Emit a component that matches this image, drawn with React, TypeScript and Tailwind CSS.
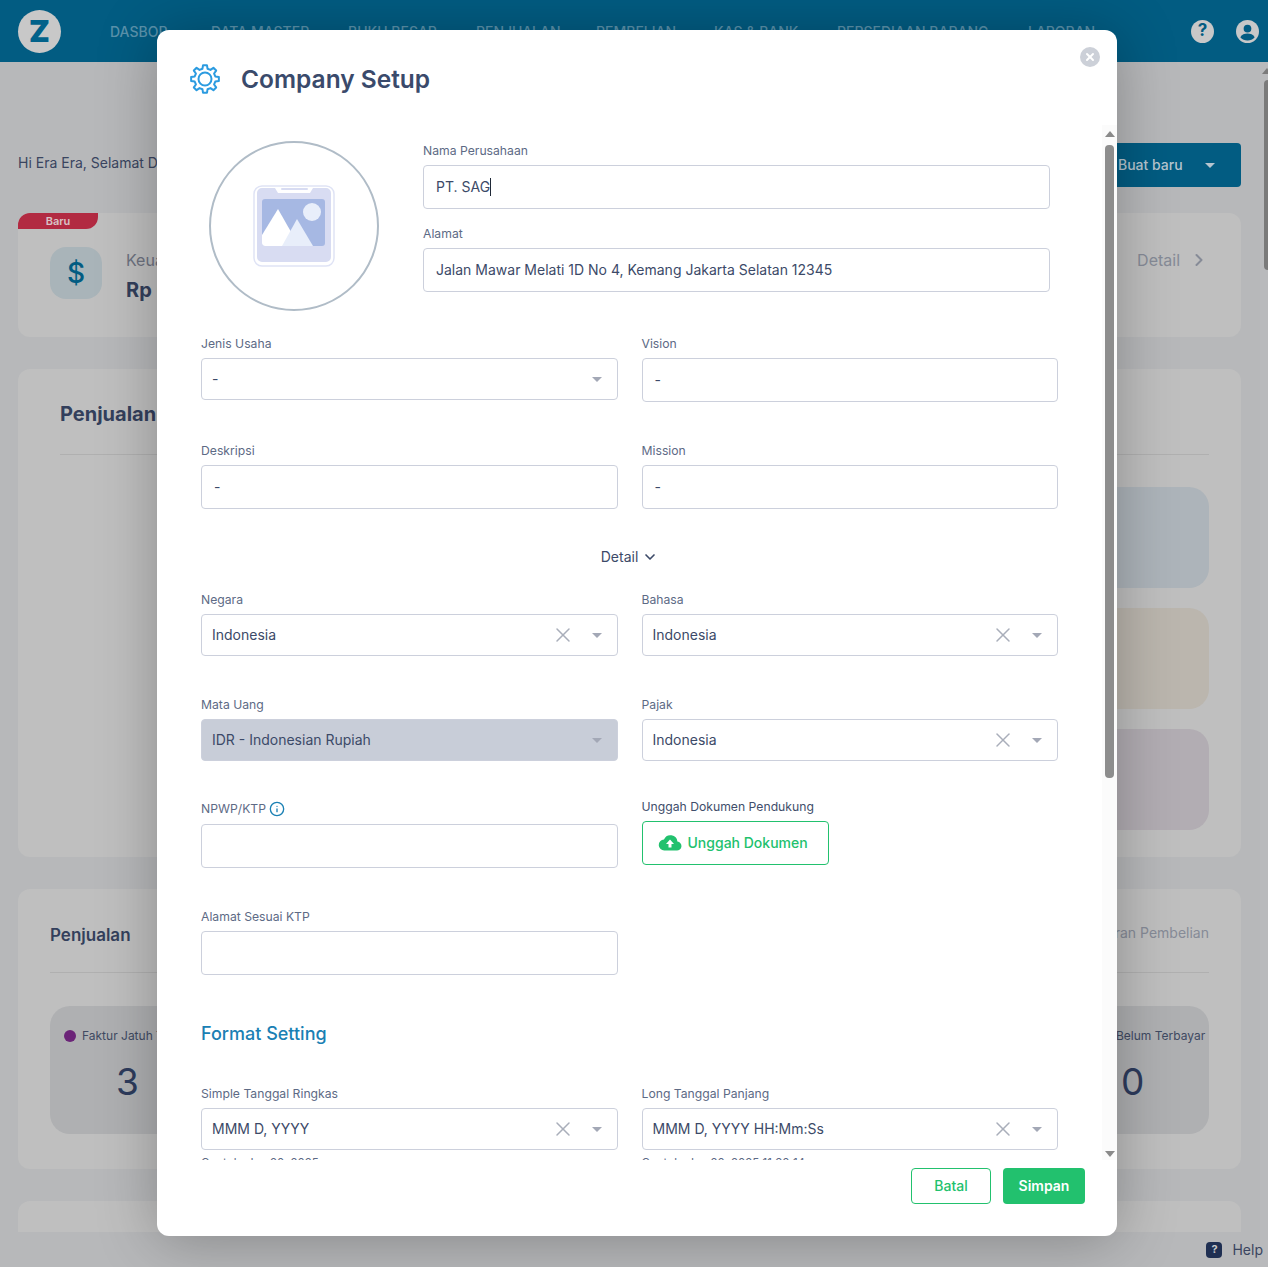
import { ChevronDown, ChevronRight, Info, X } from 'lucide-react';

const font = "font-['Inter','Liberation_Sans',sans-serif]";

// eight rounded teeth, the icon set's cogs don't match this one
const gearPath =
  [0, 45, 90, 135, 180, 225, 270, 315]
    .flatMap((a) => [
      [10.6, a - 14],
      [14, a - 8],
      [14, a + 8],
      [10.6, a + 14],
    ])
    .map(([r, deg], i) => {
      const rad = (deg * Math.PI) / 180;
      return `${i === 0 ? 'M' : 'L'}${(r * Math.cos(rad)).toFixed(2)} ${(r * Math.sin(rad)).toFixed(2)}`;
    })
    .join(' ') + ' Z';

function Caret({ className = 'border-t-[#a3a8b6]' }: { className?: string }) {
  return <span className={`h-0 w-0 border-x-[5px] border-t-[5px] border-x-transparent ${className}`} />;
}

function Label({ children }: { children: React.ReactNode }) {
  return <div className="mb-[6px] flex h-[17px] items-center text-[12.2px] leading-4 text-[#5d6a85]">{children}</div>;
}

function TextField({
  label,
  value,
  cursor = false,
  className = '',
}: {
  label: React.ReactNode;
  value?: string;
  cursor?: boolean;
  className?: string;
}) {
  return (
    <div className={className}>
      <Label>{label}</Label>
      <div className="flex h-11 items-center rounded border border-[#ccd0dc] px-3 text-sm text-[#3c4a68]">
        {value}
        {cursor && <span className="h-[18px] w-px bg-[#1f2937]" />}
      </div>
    </div>
  );
}

function SelectField({
  label,
  value,
  clear = true,
  disabled = false,
  className = '',
}: {
  label: string;
  value: string;
  clear?: boolean;
  disabled?: boolean;
  className?: string;
}) {
  return (
    <div className={className}>
      <Label>{label}</Label>
      <div
        className={`flex h-[42px] items-center rounded border border-[#ccd0dc] pl-[10px] pr-[15px] text-sm text-[#3c4a68] ${
          disabled ? 'bg-[#c8cdd8]' : ''
        }`}
      >
        <span className="flex-1">{value}</span>
        {clear && <X className="mr-[17px] h-6 w-6 text-[#a9aeba]" strokeWidth={1.5} />}
        <Caret />
      </div>
    </div>
  );
}

function Tile({ className }: { className: string }) {
  return <div className={`h-[101px] rounded-[20px] ${className}`} />;
}

function Background() {
  const nav = [
    ['DASBOR', 'w-[101px]'],
    ['DATA MASTER', 'w-[137px]'],
    ['BUKU BESAR', 'w-[128px]'],
    ['PENJUALAN', 'w-[120px]'],
    ['PEMBELIAN', 'w-[118px]'],
    ['KAS & BANK', 'w-[123px]'],
    ['PERSEDIAAN BARANG', 'w-[191px]'],
    ['LAPORAN', 'w-[80px]'],
  ];

  return (
    <div className="h-full">
      {/* Top bar */}
      <header className="flex h-[62px] items-center bg-[#025c82] pl-[18px] pr-[9px]">
        <div className="flex h-[43px] w-[43px] items-center justify-center rounded-full bg-[#c8c8c8] text-[30px] font-black leading-none text-[#02628a]">
          Z
        </div>
        <nav className="ml-[49px] flex flex-1 text-[14px] font-medium text-[#5a92ab]">
          {nav.map(([name, w]) => (
            <span key={name} className={`${w} whitespace-nowrap`}>
              {name}
            </span>
          ))}
        </nav>
        <div className="flex h-[23px] w-[23px] items-center justify-center rounded-full bg-[#c8c8c8] text-[17px] font-bold text-[#025c82]">
          ?
        </div>
        <svg viewBox="0 0 24 24" className="ml-[22px] h-[23px] w-[23px]">
          <circle cx="12" cy="12" r="12" fill="#c8c8c8" />
          <circle cx="12" cy="9" r="4" fill="#025c82" />
          <path d="M4.5 18c1.5-3 4.5-4 7.5-4s6 1 7.500 4a10 10 0 0 1-15 0z" fill="#025c82" />
        </svg>
      </header>

      <main className="pl-[18px] pr-[27px]">
        <div className="flex h-[151px] items-end pb-[26px]">
          <div className="flex h-11 flex-1 items-center justify-between">
            <span className="pb-1 text-sm text-[#3a4560]">Hi Era Era, Selamat Datang</span>
            <div className="flex h-11 w-[150px] items-center rounded bg-[#025c82] pl-[27px] text-sm font-medium text-[#b6c5cf]">
              Buat baru
              <Caret className="ml-[22px] border-t-[#b6c5cf]" />
            </div>
          </div>
        </div>

        {/* Announcement card */}
        <section className="relative flex h-[124px] items-start rounded-xl bg-[#bfbfbf] pl-8 pt-[34px]">
          <span className="absolute left-0 top-0 flex h-4 w-20 items-center justify-center rounded-tl-xl rounded-br-xl bg-[#b22a42] text-[11px] font-semibold text-[#d8c2c6]">
            Baru
          </span>
          <div className="flex h-[52px] w-[52px] items-center justify-center rounded-2xl bg-[#a9b4b9] text-[28px] font-medium text-[#025c82]">
            $
          </div>
          <div className="ml-6">
            <div className="mt-px text-base leading-6 text-[#6d7280]">Keuangan</div>
            <div className="mt-[6px] text-xl font-bold leading-6 text-[#333f5c]">Rp 0</div>
          </div>
          <div className="ml-auto mr-8 mt-px flex items-center gap-[9px] text-base leading-6 text-[#868b97]">
            Detail
            <ChevronRight className="h-5 w-5" strokeWidth={2.4} />
          </div>
        </section>

        {/* Sales chart card */}
        <section className="mt-8 h-[488px] rounded-xl bg-[#bfbfbf] pl-[42px] pr-8 pt-[31px]">
          <h2 className="border-b border-[#b0b0b0] pb-[26px] text-xl font-bold leading-7 text-[#333f5c]">Penjualan</h2>
          <div className="ml-auto mt-[32px] flex w-[320px] flex-col gap-5">
            <Tile className="bg-[#adb4ba]" />
            <Tile className="bg-[#bbb6ae]" />
            <Tile className="bg-[#b2adb3]" />
          </div>
        </section>

        {/* Sales summary card */}
        <section className="mt-8 h-[280px] rounded-xl bg-[#bfbfbf] px-8 pt-[33px]">
          <div className="flex items-start justify-between border-b border-[#b0b0b0] pb-6">
            <h2 className="text-[17px] font-semibold leading-[26px] text-[#333f5c]">Penjualan</h2>
            <span className="text-sm leading-[22px] text-[#868b97]">Pengeluaran Pembelian</span>
          </div>
          <div className="mt-[33px] flex justify-between">
            <div className="h-[128px] w-[300px] rounded-[20px] bg-[#afb0b2] pl-[14px] pt-[22px]">
              <div className="flex items-center gap-[6px] text-xs text-[#404a62]">
                <span className="h-3 w-3 rounded-full bg-[#6b2478]" />
                Faktur Jatuh Tempo
              </div>
              <div className="mt-4 pl-[52px] text-[37px] leading-[44px] text-[#2d3b5c]">3</div>
            </div>
            <div className="h-[128px] w-[300px] rounded-[20px] bg-[#afb0b2] pl-[207px] pt-[22px]">
              <div className="whitespace-nowrap text-xs text-[#404a62]">Belum Terbayar</div>
              <div className="mt-4 pl-[5px] text-[37px] leading-[44px] text-[#2d3b5c]">0</div>
            </div>
          </div>
        </section>

        <section className="mt-8 h-[31px] rounded-t-xl bg-[#bfbfbf]" />
      </main>
    </div>
  );
}

function ImagePlaceholder() {
  return (
    <svg viewBox="0 0 82 82" className="h-[82px] w-[82px]">
      <rect x="1" y="1" width="80" height="80" rx="8" fill="#fff" stroke="#dfe3f5" strokeWidth="1.500" />
      <path
        d="M9 3h13l3 5h32l3-5h13a5 5 0 0 1 5 5v64a5 5 0 0 1-5 5H9a5 5 0 0 1-5-5V8a5 5 0 0 1 5-5z"
        fill="#d8dcf2"
      />
      <rect x="28" y="3" width="27" height="2" rx="1" fill="#d8dcf2" />
      <rect x="9" y="14" width="63" height="47" rx="3" fill="#a6b8e3" />
      <circle cx="59" cy="27" r="9" fill="#e8eefa" />
      <path d="M9 50l16-26 21 37H12a3 3 0 0 1-3-3z" fill="#fff" />
      <path d="M29 61l15-27 16 27z" fill="#e8eefa" />
    </svg>
  );
}

function CompanySetup() {
  return (
    <div className="absolute left-[157px] top-[30px] flex h-[1206px] w-[960px] flex-col rounded-xl bg-white shadow-[0_4px_60px_rgba(0,0,0,0.28)]">
      <div className="relative flex h-[95px] shrink-0 items-start pl-[32px] pt-[33px]">
        <svg
          viewBox="-16 -16 32 32"
          className="h-[32px] w-[32px] text-[#2b9be0]"
          fill="none"
          stroke="currentColor"
          strokeWidth="2"
          strokeLinejoin="round"
        >
          <path d={gearPath} />
          <circle r="6.5" />
        </svg>
        <h1 className="ml-[20px] text-[24.5px] font-semibold leading-[32px] text-[#3a4a6b]">Company Setup</h1>
        <span className="absolute right-[17px] top-[17px] flex h-5 w-5 items-center justify-center rounded-full bg-[#ccd0d8]">
          <X className="h-3 w-3 text-white" strokeWidth={4} />
        </span>
      </div>

      {/* Form area, cut off by the scroll box */}
      <div className="relative h-[1035px] shrink-0 overflow-hidden pl-11 pr-[59px]">
        <div className="flex h-[210px] pt-4">
          <div className="ml-2 flex h-[170px] w-[170px] shrink-0 items-center justify-center rounded-full border-2 border-[#b0bcc7]">
            <ImagePlaceholder />
          </div>
          <div className="ml-11 w-[627px] shrink-0">
            <TextField label="Nama Perusahaan" value="PT. SAG" cursor className="mt-px" />
            <TextField label="Alamat" value="Jalan Mawar Melati 1D No 4, Kemang Jakarta Selatan 12345" className="mt-4" />
          </div>
        </div>

        <div className="grid grid-cols-2 gap-x-6">
          <SelectField label="Jenis Usaha" value="-" clear={false} className="mb-[42px]" />
          <TextField label="Vision" value="-" className="mb-10" />
          <TextField label="Deskripsi" value="-" />
          <TextField label="Mission" value="-" />
        </div>

        <div className="mt-[38px] flex h-5 items-center justify-center gap-1 text-sm text-[#3c4a68]">
          Detail
          <ChevronDown className="h-4 w-4" strokeWidth={2.5} />
        </div>

        <div className="mt-6 grid grid-cols-2 gap-x-6 gap-y-10">
          <SelectField label="Negara" value="Indonesia" />
          <SelectField label="Bahasa" value="Indonesia" />
          <SelectField label="Mata Uang" value="IDR - Indonesian Rupiah" clear={false} disabled />
          <SelectField label="Pajak" value="Indonesia" />
          <TextField
            label={
              <span className="-mt-px flex items-center">
                NPWP/KTP
                <Info className="ml-[3px] h-4 w-4 text-[#1a80b4]" strokeWidth={2} />
              </span>
            }
          />
          <div className="-mt-[2px]">
            <div className="mb-[6px] h-4 text-[12.2px] leading-4 text-[#414e6b]">Unggah Dokumen Pendukung</div>
            <div className="flex h-11 w-[187px] items-center gap-[6px] rounded border border-[#22c16e] pl-[15px] text-sm font-medium text-[#22c16e]">
              <svg viewBox="0 0 24 24" className="h-6 w-6">
                <path
                  d="M19.4 10.500A7 7 0 0 0 6 8.500 5.500 5.500 0 0 0 6.500 19.500h12a4.500 4.500 0 0 0 .9-9z"
                  fill="#22c16e"
                />
                <path d="M12 8.500l-4 4.500h2.500v3.500h3V13H16z" fill="#fff" />
              </svg>
              Unggah Dokumen
            </div>
          </div>
          <TextField label="Alamat Sesuai KTP" />
        </div>

        <h3 className="mt-[45px] text-[18px] font-medium leading-7 text-[#1a80b4]">Format Setting</h3>

        <div className="mt-[37px] grid grid-cols-2 gap-x-6">
          <div>
            <SelectField label="Simple Tanggal Ringkas" value="MMM D, YYYY" />
            <div className="mt-[5px] text-[11.5px] text-[#5d6a85]">Contoh: Jan 20, 2025</div>
          </div>
          <div>
            <SelectField label="Long Tanggal Panjang" value="MMM D, YYYY HH:Mm:Ss" />
            <div className="mt-[5px] text-[11.5px] text-[#5d6a85]">Contoh: Jan 20, 2025 11:30:14</div>
          </div>
        </div>

        {/* Scrollbar */}
        <div className="absolute inset-y-0 right-0 w-[15px] bg-[#fbfbfb]">
          <span className="absolute left-[3px] top-[6px] h-0 w-0 border-x-[5px] border-b-[6px] border-x-transparent border-b-[#8a8a8a]" />
          <span className="absolute left-[3px] top-[20px] h-[633px] w-[9px] rounded-[4px] bg-[#8d8d8d]" />
          <span className="absolute bottom-[3px] left-[3px] h-0 w-0 border-x-[5px] border-t-[6px] border-x-transparent border-t-[#8a8a8a]" />
        </div>
      </div>

      <div className="flex justify-end gap-3 pr-8 pt-2">
        <button className="h-9 w-20 rounded border border-[#22c16e] text-sm font-medium text-[#22c16e]">Batal</button>
        <button className="h-9 w-[82px] rounded bg-[#22c16e] text-sm font-semibold text-white">Simpan</button>
      </div>
    </div>
  );
}

export default function App() {
  return (
    <div className={`relative h-[1267px] w-[1268px] overflow-hidden bg-[#b7b8ba] ${font}`}>
      <Background />
      <CompanySetup />

      {/* Page scrollbar */}
      <div className="absolute bottom-0 right-0 top-[62px] w-2 bg-[#b9babc]">
        <span className="absolute left-[2px] top-[6px] h-0 w-0 border-x-[5px] border-b-[6px] border-x-transparent border-b-[#7b7b7b]" />
        <span className="absolute right-0 top-[18px] h-[190px] w-1 rounded-l bg-[#7b7b7b]" />
      </div>

      {/* Help */}
      <div className="absolute bottom-[7px] right-[5px] flex items-center gap-[10px] text-sm text-[#3a4560]">
        <span className="flex h-4 w-4 items-center justify-center rounded-sm bg-[#1f2f52] text-[11px] font-bold text-[#c8c8c8]">
          ?
        </span>
        Help
      </div>
    </div>
  );
}
